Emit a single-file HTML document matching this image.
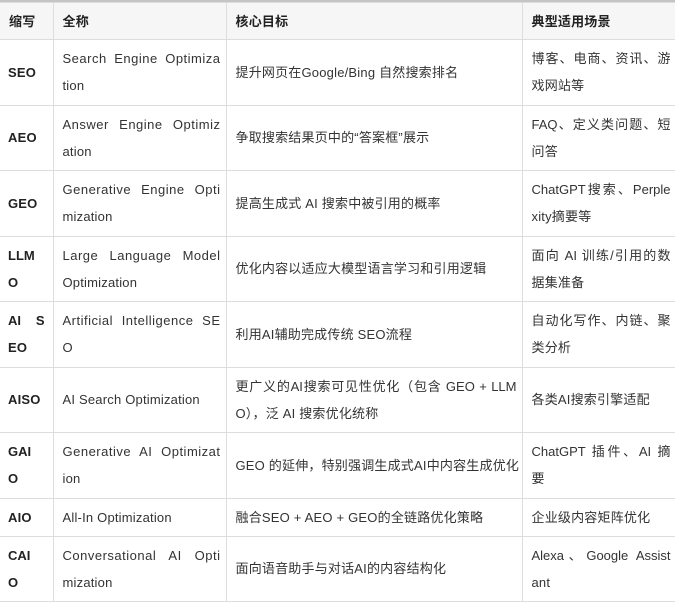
<!DOCTYPE html>
<html><head><meta charset="utf-8"><style>
html,body{margin:0;padding:0;background:#fff;width:675px;height:602px;overflow:hidden}
body{border-top:2px solid #c4c4c4;box-sizing:border-box}
table{border-collapse:collapse;width:676px;table-layout:fixed;font-family:"Liberation Sans","Noto Sans CJK SC",sans-serif;font-size:13px;color:#333;letter-spacing:0.2px}
td,th{border:1px solid #ddd;padding:0 9px;line-height:27px;vertical-align:middle;text-align:left;white-space:nowrap;overflow:hidden}
th{background:#f6f6f6;font-weight:bold;height:36px;color:#222}
tr.r td{height:64.5px}
tr.s td{height:37px}
td:first-child{font-weight:bold;color:#222;padding:0 8px}
.j{display:block;text-align:justify;text-align-last:justify;white-space:normal;margin-right:-4px;letter-spacing:0}
td:nth-child(2) .j{letter-spacing:0.5px}
td:first-child .j{margin-right:0}
td:first-child,th:first-child{border-left:none}
</style></head><body>
<table>
<colgroup><col style="width:53px"><col style="width:173px"><col style="width:296px"><col style="width:154px"></colgroup>
<tr><th>缩写</th><th>全称</th><th>核心目标</th><th>典型适用场景</th></tr>
<tr class="r"><td>SEO</td><td><span class="j">Search Engine Optimiza</span>tion</td><td>提升网页在Google/Bing 自然搜索排名</td><td><span class="j">博客、电商、资讯、游</span>戏网站等</td></tr>
<tr class="r"><td>AEO</td><td><span class="j">Answer Engine Optimiz</span>ation</td><td>争取搜索结果页中的“答案框”展示</td><td><span class="j">FAQ、定义类问题、短</span>问答</td></tr>
<tr class="r"><td>GEO</td><td><span class="j">Generative Engine Opti</span>mization</td><td>提高生成式 AI 搜索中被引用的概率</td><td><span class="j">ChatGPT搜索、Perple</span>xity摘要等</td></tr>
<tr class="r"><td><span class="j">LLM</span>O</td><td><span class="j">Large Language Model</span>Optimization</td><td>优化内容以适应大模型语言学习和引用逻辑</td><td><span class="j">面向 AI 训练/引用的数</span>据集准备</td></tr>
<tr class="r"><td><span class="j">AI S</span>EO</td><td><span class="j">Artificial Intelligence SE</span>O</td><td>利用AI辅助完成传统 SEO流程</td><td><span class="j">自动化写作、内链、聚</span>类分析</td></tr>
<tr class="r"><td>AISO</td><td>AI Search Optimization</td><td><span class="j">更广义的AI搜索可见性优化（包含 GEO + LLM</span>O），泛 AI 搜索优化统称</td><td>各类AI搜索引擎适配</td></tr>
<tr class="r"><td><span class="j">GAI</span>O</td><td><span class="j">Generative AI Optimizat</span>ion</td><td>GEO 的延伸，特别强调生成式AI中内容生成优化</td><td><span class="j">ChatGPT 插件、AI 摘</span>要</td></tr>
<tr class="s"><td>AIO</td><td>All-In Optimization</td><td>融合SEO + AEO + GEO的全链路优化策略</td><td>企业级内容矩阵优化</td></tr>
<tr class="r"><td><span class="j">CAI</span>O</td><td><span class="j">Conversational AI Opti</span>mization</td><td>面向语音助手与对话AI的内容结构化</td><td><span class="j">Alexa、Google Assist</span>ant</td></tr>
</table>
</body></html>
